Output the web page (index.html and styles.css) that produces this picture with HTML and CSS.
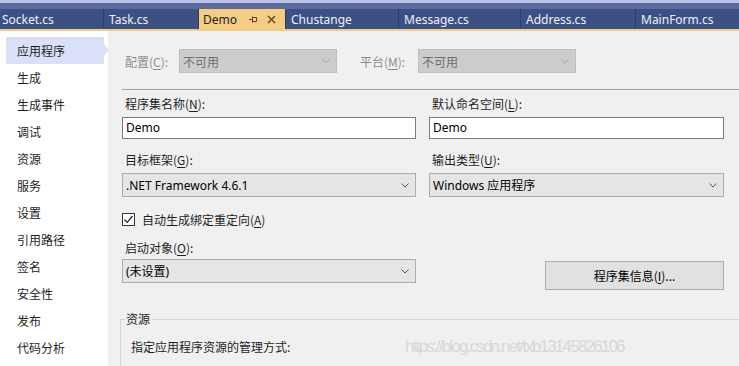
FILE: index.html
```html
<!DOCTYPE html>
<html lang="zh-CN">
  <head>
    <meta charset="UTF-8" />
    <meta name="viewport" content="width=device-width, initial-scale=1.0" />
    <title>Demo - 项目属性</title>
    <link rel="stylesheet" href="styles.css">
  </head>
  <body>
    <div class="tabbar">
      <div class="tabs">
        <div class="tab first">Socket.cs</div>
        <div class="tab">Task.cs</div>
        <div class="tab active">
          <span class="tab-name">Demo</span>
          <svg class="pin" width="8" height="7" viewBox="0 0 8 7">
            <path d="M0 3.5H3M3.5 0.5V6.5M3.5 1.5H7.5V5.5H3.5" fill="none" stroke="#5a4520" stroke-width="1" />
          </svg>
          <svg class="close" width="9" height="9" viewBox="0 0 9 9">
            <path d="M1 1L8 8M8 1L1 8" fill="none" stroke="#5a4520" stroke-width="1.4" />
          </svg>
        </div>
        <div class="tab">Chustange</div>
        <div class="tab">Message.cs</div>
        <div class="tab">Address.cs</div>
        <div class="tab">MainForm.cs</div>
      </div>
    </div>

    <div class="layout">
      <nav class="sidebar">
        <div class="nav-item selected">应用程序</div>
        <div class="nav-item">生成</div>
        <div class="nav-item">生成事件</div>
        <div class="nav-item">调试</div>
        <div class="nav-item">资源</div>
        <div class="nav-item">服务</div>
        <div class="nav-item">设置</div>
        <div class="nav-item">引用路径</div>
        <div class="nav-item">签名</div>
        <div class="nav-item">安全性</div>
        <div class="nav-item">发布</div>
        <div class="nav-item">代码分析</div>
      </nav>

      <main class="page">
        <div class="config-row">
          <span class="cfg-label">配置(<u>C</u>):</span>
          <div class="combo disabled">
            <span>不可用</span>
            <svg class="chevron" width="8" height="5" viewBox="0 0 8 5">
              <path d="M0.5 0.5L4 4L7.5 0.5" fill="none" stroke="#a8a8a8" />
            </svg>
          </div>
          <span class="cfg-label platform">平台(<u>M</u>):</span>
          <div class="combo disabled">
            <span>不可用</span>
            <svg class="chevron" width="8" height="5" viewBox="0 0 8 5">
              <path d="M0.5 0.5L4 4L7.5 0.5" fill="none" stroke="#a8a8a8" />
            </svg>
          </div>
        </div>

        <div class="rule"></div>

        <div class="form-grid">
          <div class="field first-row">
            <label>程序集名称(<u>N</u>):</label>
            <div class="textbox">Demo</div>
          </div>
          <div class="field first-row">
            <label>默认命名空间(<u>L</u>):</label>
            <div class="textbox">Demo</div>
          </div>

          <div class="field">
            <label>目标框架(<u>G</u>):</label>
            <div class="combo">
              <span>.NET Framework 4.6.1</span>
              <svg class="chevron" width="8" height="5" viewBox="0 0 8 5">
                <path d="M0.5 0.5L4 4L7.5 0.5" fill="none" stroke="#555" />
              </svg>
            </div>
          </div>
          <div class="field">
            <label>输出类型(<u>U</u>):</label>
            <div class="combo">
              <span>Windows 应用程序</span>
              <svg class="chevron" width="8" height="5" viewBox="0 0 8 5">
                <path d="M0.5 0.5L4 4L7.5 0.5" fill="none" stroke="#555" />
              </svg>
            </div>
          </div>

          <div class="check-row">
            <span class="checkbox">
              <svg width="11" height="11" viewBox="0 0 11 11">
                <path d="M1.5 5.5L4.2 8.3L9.5 2" fill="none" stroke="#222" stroke-width="1.2" />
              </svg>
            </span>
            <span>自动生成绑定重定向(<u>A</u>)</span>
          </div>

          <div class="field startup">
            <label>启动对象(<u>O</u>):</label>
            <div class="combo">
              <span>(未设置)</span>
              <svg class="chevron" width="8" height="5" viewBox="0 0 8 5">
                <path d="M0.5 0.5L4 4L7.5 0.5" fill="none" stroke="#555" />
              </svg>
            </div>
          </div>
          <button class="btn">程序集信息(<u>I</u>)...</button>
        </div>

        <fieldset class="group">
          <legend>资源</legend>
          <p>指定应用程序资源的管理方式:</p>
        </fieldset>

        <div class="watermark">https://blog.csdn.net/txb13145826106</div>
      </main>
    </div>
  </body>
</html>
```

FILE: styles.css
```css
html,
body {
  margin: 0;
  padding: 0;
}
body {
  width: 739px;
  height: 366px;
  overflow: hidden;
  background: #f0f0f0;
  font-family: "Noto Sans CJK SC", "Noto Sans", sans-serif;
  font-size: 12px;
  color: #1e1e1e;
}
u {
  text-decoration-thickness: 1px;
  text-underline-offset: 2px;
}

/* document tabs */
.tabbar {
  background: #5c6b9c;
  border-top: 3px solid #b9c4e8;
  border-bottom: 2px solid #f5cc84;
  padding-top: 6px;
}
.tabs {
  display: grid;
  grid-template-columns: 103px 94px 86px 112px 121px 114px 103px;
  column-gap: 1px;
  background: #2f3c68;
  height: 20px;
}
.tab {
  display: flex;
  align-items: center;
  padding: 0 5px;
  background: #3d5084;
  color: #eef1fa;
  font-family: "Noto Sans", sans-serif;
  font-size: 12px;
  white-space: nowrap;
  overflow: hidden;
}
.tab.first {
  padding-left: 2px;
}
.tab.active {
  background: #f5cc84;
  color: #1e1e1e;
  padding-left: 4px;
}
.tab-name {
  flex: 1;
}
.pin {
  margin-right: 10px;
}
.close {
  margin-right: 4px;
}

/* page body */
.layout {
  display: grid;
  grid-template-columns: 108px 1fr;
  height: 335px;
}
.sidebar {
  background: #ffffff;
  padding-top: 6px;
}
.nav-item {
  position: relative;
  box-sizing: border-box;
  width: 98px;
  height: 27px;
  line-height: 27px;
  margin-left: 6px;
  padding-left: 11px;
}
.nav-item.selected {
  background: #d9e0f8;
}
.nav-item.selected::after {
  content: "";
  position: absolute;
  right: -5px;
  top: 7px;
  border-left: 5px solid #d9e0f8;
  border-top: 6px solid transparent;
  border-bottom: 6px solid transparent;
}

.page {
  position: relative;
  overflow: hidden;
  padding: 18px 15px 0 14px;
}
.config-row {
  display: flex;
  align-items: center;
  height: 24px;
}
.cfg-label {
  box-sizing: border-box;
  width: 57px;
  padding-left: 3px;
  color: #8c8c8c;
}
.cfg-label.platform {
  width: 58px;
  margin-left: 23px;
  padding-left: 0;
}
.config-row .combo {
  width: 158px;
}

.combo {
  box-sizing: border-box;
  display: flex;
  align-items: center;
  justify-content: space-between;
  height: 24px;
  padding: 0 6px 0 3px;
  background: #e5e5e5;
  border: 1px solid #adadad;
  color: #000;
  white-space: nowrap;
}
.combo.disabled {
  background: #cccccc;
  border-color: #bfbfbf;
  color: #6d6d6d;
}
.chevron {
  flex: none;
}

.rule {
  margin: 16px -15px 0 0;
  border-top: 1px solid #a0a0a0;
}

.form-grid {
  display: grid;
  grid-template-columns: 294px 295px;
  column-gap: 13px;
  align-items: start;
}
.field {
  display: flex;
  flex-direction: column;
  margin-top: 13px;
}
.field.first-row {
  margin-top: 6px;
}
.field label {
  line-height: 16px;
  padding-left: 3px;
  margin-bottom: 5px;
}
.field.startup label {
  margin-bottom: 3px;
}
.textbox {
  box-sizing: border-box;
  height: 22px;
  line-height: 20px;
  padding-left: 3px;
  background: #ffffff;
  border: 1px solid #7a7a7a;
  color: #000;
  font-family: "Noto Sans", "Noto Sans CJK SC", sans-serif;
}
.combo span {
  font-family: "Noto Sans", "Noto Sans CJK SC", sans-serif;
}
.combo.disabled span {
  font-family: "Noto Sans CJK SC", sans-serif;
}

.check-row {
  grid-column: 1 / 3;
  display: flex;
  align-items: center;
  gap: 7px;
  height: 16px;
  margin-top: 14px;
}
.checkbox {
  box-sizing: border-box;
  display: flex;
  align-items: center;
  justify-content: center;
  width: 13px;
  height: 13px;
  background: #ffffff;
  border: 1px solid #333333;
}

.btn {
  justify-self: end;
  box-sizing: border-box;
  width: 179px;
  height: 29px;
  margin-top: 34px;
  background: #e1e1e1;
  border: 1px solid #adadad;
  font-family: "Noto Sans CJK SC", sans-serif;
  font-size: 12px;
  color: #000;
  padding: 0;
}

.group {
  margin: 21px -15px 0 -2px;
  padding: 12px 0 20px 10px;
  border: none;
  border-top: 1px solid #d5d5d5;
  border-left: 1px solid #d5d5d5;
}
.group legend {
  margin-left: -6px;
  padding: 0 2px 0 1px;
  line-height: 16px;
}
.group p {
  margin: 0;
  line-height: 16px;
}

.watermark {
  position: absolute;
  left: 297px;
  top: 306px;
  line-height: 20px;
  font-family: "Liberation Sans", Arial, sans-serif;
  font-size: 17px;
  letter-spacing: -1.8px;
  color: #d8d8d8;
  white-space: nowrap;
}
```
